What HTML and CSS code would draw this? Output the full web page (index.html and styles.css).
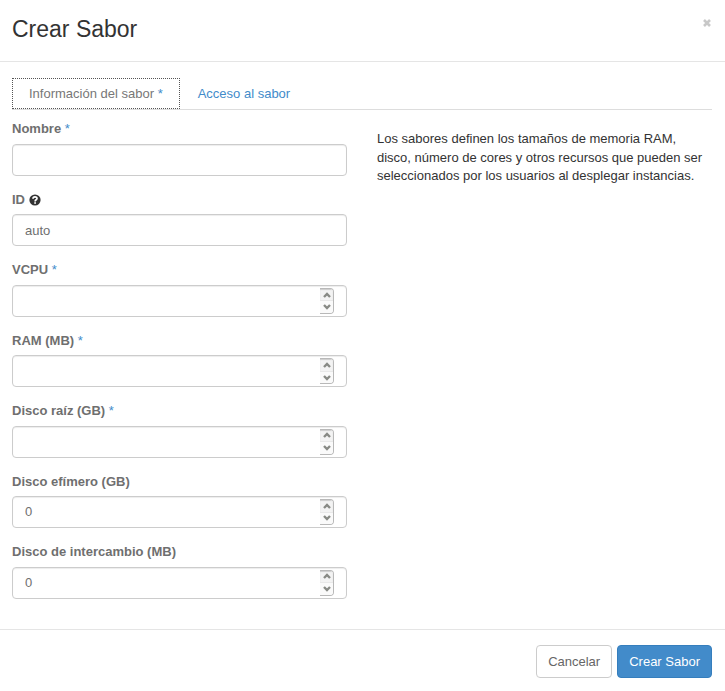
FILE: index.html
```html
<!DOCTYPE html>
<html lang="es">
<head>
<meta charset="utf-8">
<meta name="viewport" content="width=device-width, initial-scale=1">
<title>Crear Sabor</title>
<link rel="stylesheet" href="styles.css">
</head>
<body>
<svg class="symbols" aria-hidden="true">
  <symbol id="up" viewBox="0 0 8 6"><path d="M1 5 4 2 7 5" fill="none" stroke="#888a85" stroke-width="2.4"/></symbol>
  <symbol id="down" viewBox="0 0 8 6"><path d="M1 1 4 4 7 1" fill="none" stroke="#888a85" stroke-width="2.4"/></symbol>
</svg>
<main class="modal">
  <header class="modal-header">
    <h3 class="modal-title">Crear Sabor</h3>
    <button class="close" type="button" aria-label="Cerrar"><svg viewBox="0 0 8 8" width="8" height="8"><path d="M1 1 7 7M7 1 1 7" stroke="#c8c8c8" stroke-width="2.6"/></svg></button>
  </header>
  <form class="modal-form">
    <div class="modal-body">
      <nav class="tabs">
        <a class="tab active" href="#info">Información del sabor <span class="required">*</span></a>
        <a class="tab" href="#access">Acceso al sabor</a>
      </nav>
      <div class="columns" id="info">
        <div class="fields">
          <div class="field">
            <label for="name">Nombre <span class="required">*</span></label>
            <div class="control"><input id="name" type="text"></div>
          </div>
          <div class="field">
            <label for="flavor-id">ID <svg class="help" viewBox="0 0 12 12" width="12" height="12"><circle cx="6" cy="6" r="5.6" fill="#333"/><path d="M4 4.8C4 2.4 8 2.4 8 4.5 8 5.9 6.1 5.7 6.1 7.4" fill="none" stroke="#fff" stroke-width="1.7"/><path d="M5.2 8.2h1.8v1.6H5.2z" fill="#fff"/></svg></label>
            <div class="control"><input id="flavor-id" type="text" value="auto"></div>
          </div>
          <div class="field">
            <label for="vcpu">VCPU <span class="required">*</span></label>
            <div class="control"><input id="vcpu" type="number"><span class="spinner"><button type="button" aria-label="Aumentar"><svg><use href="#up"/></svg></button><button type="button" aria-label="Disminuir"><svg><use href="#down"/></svg></button></span></div>
          </div>
          <div class="field">
            <label for="ram">RAM (MB) <span class="required">*</span></label>
            <div class="control"><input id="ram" type="number"><span class="spinner"><button type="button" aria-label="Aumentar"><svg><use href="#up"/></svg></button><button type="button" aria-label="Disminuir"><svg><use href="#down"/></svg></button></span></div>
          </div>
          <div class="field">
            <label for="root">Disco raíz (GB) <span class="required">*</span></label>
            <div class="control"><input id="root" type="number"><span class="spinner"><button type="button" aria-label="Aumentar"><svg><use href="#up"/></svg></button><button type="button" aria-label="Disminuir"><svg><use href="#down"/></svg></button></span></div>
          </div>
          <div class="field">
            <label for="ephemeral">Disco efímero (GB)</label>
            <div class="control"><input id="ephemeral" type="number" value="0"><span class="spinner"><button type="button" aria-label="Aumentar"><svg><use href="#up"/></svg></button><button type="button" aria-label="Disminuir"><svg><use href="#down"/></svg></button></span></div>
          </div>
          <div class="field">
            <label for="swap">Disco de intercambio (MB)</label>
            <div class="control"><input id="swap" type="number" value="0"><span class="spinner"><button type="button" aria-label="Aumentar"><svg><use href="#up"/></svg></button><button type="button" aria-label="Disminuir"><svg><use href="#down"/></svg></button></span></div>
          </div>
        </div>
        <p class="description">Los sabores definen los tamaños de memoria RAM, disco, número de cores y otros recursos que pueden ser seleccionados por los usuarios al desplegar instancias.</p>
      </div>
    </div>
    <footer class="modal-footer">
      <button class="btn" type="button">Cancelar</button>
      <button class="btn btn-primary" type="submit">Crear Sabor</button>
    </footer>
  </form>
</main>
</body>
</html>
```
FILE: styles.css
```css
* { box-sizing: border-box; }
body {
  margin: 0;
  background: #fff;
  color: #333;
  font-family: "Liberation Sans", Arial, sans-serif;
  font-size: 13px;
  line-height: 1.42;
}
button, input { font: inherit; }
.symbols { display: none; }
.modal-header {
  display: flex;
  justify-content: space-between;
  align-items: flex-start;
  padding: 16px 13px 19px 12px;
  border-bottom: 1px solid #e5e5e5;
}
.modal-title {
  margin: 0;
  font-size: 23px;
  font-weight: 400;
  line-height: 26px;
}
.close {
  display: flex;
  padding: 3px 1px;
  border: 0;
  background: none;
}
.modal-body { padding: 16px 13px 15px 12px; }
.tabs {
  display: flex;
  gap: 1px;
  border-bottom: 1px solid #ddd;
}
.tab {
  padding: 6px 16px 5px;
  border: 1px solid transparent;
  color: #428bca;
  text-decoration: none;
}
.tab.active {
  border: 1px dotted #555;
  color: #777;
}
.required {
  color: #428bca;
  font-weight: 400;
}
.columns {
  display: grid;
  grid-template-columns: 1fr 1fr;
  gap: 30px;
  padding-top: 10px;
}
.field { margin-bottom: 15px; }
.field label {
  display: block;
  margin-bottom: 5px;
  color: #6f6f6f;
  font-weight: 700;
}
.help { vertical-align: -2px; }
.control {
  display: flex;
  align-items: center;
  height: 32px;
  padding: 0 12px;
  border: 1px solid #ccc;
  border-radius: 4px;
  box-shadow: inset 0 1px 1px rgba(0, 0, 0, 0.075);
}
.control input {
  flex: 1;
  min-width: 0;
  padding: 1px 0 0;
  border: 0;
  outline: 0;
  background: none;
  color: #6f6f6f;
  appearance: textfield;
}
.control input::-webkit-inner-spin-button { appearance: none; margin: 0; }
.spinner {
  display: flex;
  flex-direction: column;
  width: 14px;
  height: 26px;
  border: 1px solid #b8b8b8;
  border-left: 0;
  border-radius: 0 4px 4px 0;
  overflow: hidden;
}
.spinner button {
  display: flex;
  flex: 1;
  align-items: center;
  justify-content: center;
  padding: 0;
  border: 0;
  background: #fafafa;
}
.spinner button:first-child {
  border-bottom: 1px solid #e8e8e8;
  background: #f3f3f3;
  box-shadow: inset 0 1px 1px #ccc;
}
.spinner svg { width: 8px; height: 6px; }
.description { margin: 10px 0 0; }
.modal-footer {
  display: flex;
  justify-content: flex-end;
  gap: 5px;
  padding: 15px 13px;
  border-top: 1px solid #e5e5e5;
}
.btn {
  padding: 6px 11px;
  border: 1px solid #ccc;
  border-radius: 4px;
  background: #fff;
  color: #666;
  line-height: 19px;
}
.btn-primary {
  border-color: #357ebd;
  background: #428bca;
  color: #fff;
}
```
